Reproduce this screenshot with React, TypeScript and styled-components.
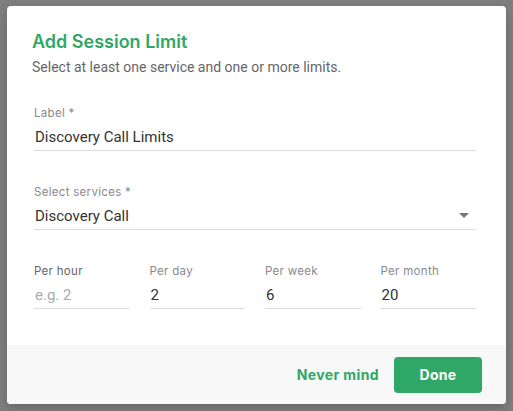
import React from 'react';
import styled, { createGlobalStyle } from 'styled-components';

const GlobalStyle = createGlobalStyle`
    html, body {
        margin: 0;
        padding: 0;
        background: #7f7f7f;
    }
    * {
        box-sizing: border-box;
    }
`;

interface FieldProps {
    label: string;
    value?: string;
    placeholder?: string;
    focused?: boolean;
}

const limits: FieldProps[] = [
    { label: 'Per hour', placeholder: 'e.g. 2', focused: true },
    { label: 'Per day', value: '2' },
    { label: 'Per week', value: '6' },
    { label: 'Per month', value: '20' },
];

const Field: React.FC<FieldProps> = ({ label, value, placeholder, focused }): JSX.Element => {
    return (
        <FieldWrapper>
            <FieldLabel focused={focused}>{label}</FieldLabel>
            <FieldInput>
                {value ? <Value>{value}</Value> : <Placeholder>{placeholder}</Placeholder>}
            </FieldInput>
        </FieldWrapper>
    );
};

export default function App(): JSX.Element {
    return (
        <>
            <GlobalStyle />
            <Overlay>
                <Dialog>
                    <Header>
                        <Title>Add Session Limit</Title>
                        <Subtitle>Select at least one service and one or more limits.</Subtitle>
                    </Header>
                    <Body>
                        <FieldWrapper>
                            <FieldLabel>Label *</FieldLabel>
                            <FieldInput>
                                <Value>Discovery Call Limits</Value>
                            </FieldInput>
                        </FieldWrapper>
                        <FieldWrapper>
                            <FieldLabel>Select services *</FieldLabel>
                            <FieldInput>
                                <Value>Discovery Call</Value>
                                <Arrow />
                            </FieldInput>
                        </FieldWrapper>
                        <LimitRow>
                            {limits.map((l) => (
                                <Field key={l.label} {...l} />
                            ))}
                        </LimitRow>
                    </Body>
                    <Footer>
                        <TextButton>Never mind</TextButton>
                        <PrimaryButton>Done</PrimaryButton>
                    </Footer>
                </Dialog>
            </Overlay>
        </>
    );
}

const Overlay = styled.div`
    width: 513px;
    height: 411px;
    padding: 6px 0 0 7px;
    overflow: hidden;
`;

const Dialog = styled.div`
    width: 499px;
    height: 398px;
    background: #fff;
    border-radius: 4px;
    overflow: hidden;
    display: flex;
    flex-direction: column;
    box-shadow: 0 4px 12px rgba(0, 0, 0, 0.2);
`;

const Header = styled.div`
    padding: 24px 27px 0 25px;
`;

const Title = styled.h2`
    margin: 0;
    color: #2fa766;
    font-family: Inter, 'Open Sans', sans-serif;
    font-weight: 600;
    font-size: 18px;
    line-height: 24px;
    letter-spacing: 0;
`;

const Subtitle = styled.p`
    margin: 4px 0 0 0;
    color: #666;
    font-family: Roboto, 'Noto Sans', sans-serif;
    font-size: 14px;
    line-height: 18px;
`;

const Body = styled.div`
    flex: 1;
    display: flex;
    flex-direction: column;
    gap: 34px;
    padding: 30px 30px 0 27px;
`;

const FieldWrapper = styled.div`
    display: flex;
    flex-direction: column;
`;

const FieldLabel = styled.label<{ focused?: boolean }>`
    color: ${(props) => (props.focused ? '#666' : '#8a8a8a')};
    font-family: Inter, 'Open Sans', sans-serif;
    font-size: 11.5px;
    line-height: 14px;
    letter-spacing: 0.3px;
`;

const FieldInput = styled.div`
    position: relative;
    display: flex;
    align-items: center;
    height: 31px;
    padding: 4px 0 0 1px;
    border-bottom: 1px solid #ddd;
`;

const Value = styled.span`
    color: #333;
    font-family: Roboto, 'Noto Sans', sans-serif;
    font-size: 15px;
`;

const Placeholder = styled(Value)`
    color: #aaa;
`;

const Arrow = styled.span`
    position: absolute;
    right: 7px;
    top: 14px;
    width: 0;
    height: 0;
    border-left: 5px solid transparent;
    border-right: 5px solid transparent;
    border-top: 5px solid #757575;
`;

const LimitRow = styled.div`
    display: flex;
    gap: 20px;

    & > ${FieldWrapper} {
        flex: 1;
    }
`;

const Footer = styled.div`
    height: 59px;
    margin-top: auto;
    flex-shrink: 0;
    background: #f8f8f8;
    display: flex;
    align-items: center;
    justify-content: flex-end;
    gap: 15px;
    padding: 0 24px 0 0;
`;

const TextButton = styled.button`
    background: none;
    border: none;
    padding: 0;
    color: #2fa766;
    font-family: Inter, 'Open Sans', sans-serif;
    font-weight: 700;
    font-size: 14px;
    letter-spacing: 0.4px;
    cursor: pointer;
`;

const PrimaryButton = styled.button`
    width: 88px;
    height: 36px;
    border: none;
    border-radius: 4px;
    background: #2fa766;
    color: #fff;
    font-family: Inter, 'Open Sans', sans-serif;
    font-weight: 700;
    font-size: 14px;
    letter-spacing: 0.3px;
    cursor: pointer;
`;
